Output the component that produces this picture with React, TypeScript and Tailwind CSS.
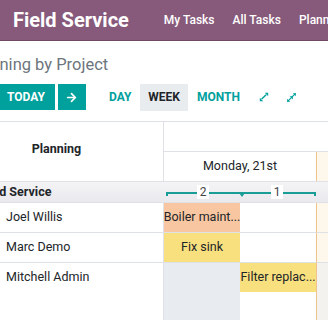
import React from 'react';
import { ArrowRight } from 'lucide-react';

const ExpandIcon = () => (
  <svg width="10" height="10" viewBox="0 0 10 10" fill="#00a09d">
    <path d="M2.2 6.6 L6.6 2.2 L7.6 3.2 L3.2 7.6 Z" />
    <path d="M5.8 0.8 H9.2 V4.2 Z" />
    <path d="M0.8 5.8 V9.2 H4.2 Z" />
  </svg>
);

const CompressIcon = () => (
  <svg width="11" height="11" viewBox="0 0 11 11" fill="#00a09d">
    <path d="M1 9.2 L9.2 1 L10 1.8 L1.8 10 Z" />
    <path d="M3.6 4.2 H6.8 V7.4 Z" />
    <path d="M6.8 1.2 H9.8 V4.2 Z" />
    <path d="M1.2 6.8 V9.8 H4.2 Z" />
  </svg>
);

const rows = [
  { name: 'Joel Willis', task: 'Boiler maint...', color: 'bg-[#f8c7a2]' },
  { name: 'Marc Demo', task: 'Fix sink', color: 'bg-[#f9e07e]' },
];

export default function App() {
  return (
    <div className="w-[328px] h-[320px] overflow-hidden bg-white text-[#212529]" style={{ fontFamily: 'Roboto, "Liberation Sans", sans-serif' }}>
      {/* top bar */}
      <div className="h-[41px] bg-[#875a7b] border-b border-[#6e4a65] flex items-center text-white whitespace-nowrap">
        <div className="ml-[13px] text-[20px] font-bold leading-none">Field Service</div>
        <div className="ml-[35px] flex gap-[18px] text-[12px] font-medium">
          <span>My Tasks</span>
          <span>All Tasks</span>
          <span>Planning</span>
        </div>
      </div>

      <div className="mt-[12px] h-[24px] leading-[24px] text-[16.5px] text-[#6c757d] -ml-[33px] whitespace-nowrap">Planning by Project</div>

      {/* toolbar */}
      <div className="mt-[7px] h-[26px] flex items-center whitespace-nowrap text-[12px] font-bold">
        <button className="-ml-[3px] h-[26px] px-[10px] bg-[#00a09d] text-white uppercase">Today</button>
        <button className="ml-[3px] h-[26px] w-[28px] bg-[#00a09d] text-white flex items-center justify-center">
          <ArrowRight size={13} strokeWidth={3.2} />
        </button>
        <button className="ml-[15px] h-[26px] px-[8px] text-[#00a09d]">DAY</button>
        <button className="ml-[1px] h-[27px] px-[8px] bg-[#e9ecef] text-[#212529]">WEEK</button>
        <button className="ml-[1px] h-[26px] px-[8px] text-[#00a09d]">MONTH</button>
        <span className="ml-[11px] flex items-center"><ExpandIcon /></span>
        <span className="ml-[17px] flex items-center"><CompressIcon /></span>
      </div>

      {/* gantt */}
      <div className="mt-[11px] -ml-[50px] w-[420px] border-t border-[#dee2e6] grid grid-cols-[214px_76px_76px_1fr] text-[12.5px]">
        <div className="row-span-2 border-r border-[#dee2e6] flex items-center justify-center font-bold pb-[5px]">Planning</div>
        <div className="col-span-3 h-[30px] border-b border-[#dee2e6]" />
        <div className="col-span-2 h-[29px] flex items-center justify-center">Monday, 21st</div>
        <div className="bg-[#fef8ec] border-l border-[#f0c48f]" />

        {/* group row */}
        <div className="h-[22px] bg-gradient-to-b from-[#f4f4f6] to-[#e9e9ee] border-y border-[#dee2e6] flex items-center pl-[29px] font-bold whitespace-nowrap">Field Service</div>
        <div className="col-span-2 h-[22px] bg-gradient-to-b from-[#f4f4f6] to-[#e9e9ee] border-y border-[#dee2e6] relative px-[2px]">
          <div className="absolute left-[2px] right-[0px] top-[10px] h-[4px] border-t-2 border-x-2 border-[#1a9d96]" />
          <div className="absolute left-[75px] top-[11px] w-0 h-0 border-x-[3px] border-x-transparent border-t-[4px] border-t-[#1a9d96]" />
          <div className="relative h-full grid grid-cols-2 text-[12px] font-normal text-[#444]">
            <div className="flex items-center justify-center"><span className="bg-white px-[3px] leading-[14px]">2</span></div>
            <div className="flex items-center justify-center"><span className="bg-white px-[3px] leading-[14px]">1</span></div>
          </div>
        </div>
        <div className="h-[22px] bg-gradient-to-b from-[#f4f4f6] to-[#e9e9ee] border-y border-[#dee2e6]" />

        {rows.map((r) => (
          <React.Fragment key={r.name}>
            <div className="h-[30px] border-b border-r border-[#dee2e6] flex items-center pl-[56px] whitespace-nowrap">{r.name}</div>
            <div className={`h-[30px] border-b border-[#dee2e6] ${r.color} flex items-center justify-center whitespace-nowrap`}>{r.task}</div>
            <div className="h-[30px] border-b border-[#dee2e6]" />
            <div className="h-[30px] border-b border-l border-[#dee2e6] border-l-[#f0c48f] bg-[#fef8ec]" />
          </React.Fragment>
        ))}

        <div className="h-[60px] border-r border-[#dee2e6] pl-[56px] whitespace-nowrap">
          <div className="h-[29px] flex items-center">Mitchell Admin</div>
        </div>
        <div className="h-[60px] bg-[#e8ebef]" />
        <div className="h-[60px]">
          <div className="h-[29px] bg-[#f9e07e] flex items-center justify-center whitespace-nowrap">Filter replac...</div>
        </div>
        <div className="h-[60px] border-l border-[#f0c48f] bg-[#f4f2ef]" />
      </div>
    </div>
  );
}
